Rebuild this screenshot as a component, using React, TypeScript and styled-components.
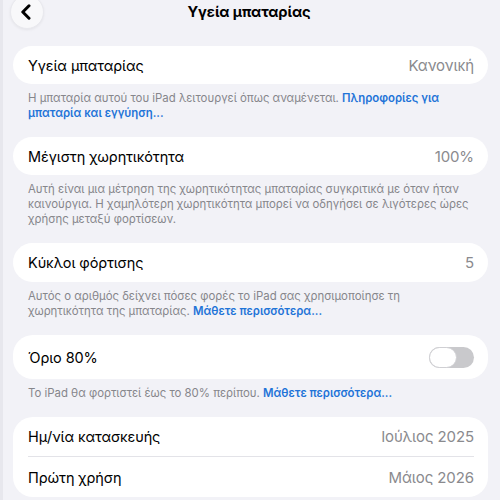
import styled, { createGlobalStyle } from 'styled-components';

const GlobalStyle = createGlobalStyle`
  html, body {
    margin: 0;
    padding: 0;
    background: #f2f2f7;
  }
  body {
    font-family: Inter, "Noto Sans", "Liberation Sans", sans-serif;
    -webkit-font-smoothing: antialiased;
  }
`;

const Page = styled.div`
  width: 500px;
  height: 500px;
  overflow: hidden;
  box-sizing: border-box;
  background: #f2f2f7;
  border-left: 3px solid #e7e7ed;
  padding: 0 12px 0 10px;
`;

const Header = styled.header`
  display: grid;
  grid-template-columns: 1fr auto 1fr;
  align-items: center;
  height: 34px;
  margin: -5px 0 17px -3px;
`;

const BackButton = styled.button`
  width: 34px;
  height: 34px;
  border-radius: 50%;
  border: 1px solid #e9e9ee;
  background: #f8f8fa;
  box-shadow: 0 1px 3px rgba(0, 0, 0, 0.06);
  display: flex;
  align-items: center;
  justify-content: center;
  padding: 0 3px 0 0;
  justify-self: start;
`;

const Title = styled.h1`
  margin: 0;
  font-size: 14.7px;
  font-weight: 700;
  color: #000;
  letter-spacing: -0.1px;
`;

const Card = styled.div`
  background: #fff;
  border-radius: 20px;
  padding: 0 14px 0 15px;
`;

const Row = styled.div<{ $height?: number; $divider?: boolean }>`
  display: flex;
  align-items: center;
  justify-content: space-between;
  height: ${({ $height }) => $height ?? 38}px;
  border-bottom: ${({ $divider }) => ($divider ? '1px solid #e3e3e8' : 'none')};
`;

const Label = styled.span`
  font-size: 14.5px;
  color: #000;
  letter-spacing: -0.1px;
`;

const Value = styled.span`
  font-size: 15px;
  color: #8a8a8e;
  letter-spacing: -0.1px;
`;

const Footer = styled.p`
  margin: 0;
  padding: 7px 15px 16px;
  font-size: 11.4px;
  line-height: 15px;
  color: #86868b;
  white-space: nowrap;
`;

const Link = styled.a`
  color: #1f74d8;
  font-weight: 600;
  text-decoration: none;
`;

const Toggle = styled.div`
  width: 45px;
  height: 21px;
  border-radius: 11px;
  background: #c9c9cc;
  display: flex;
  align-items: center;
`;

const Knob = styled.div`
  width: 28px;
  height: 21px;
  border-radius: 11px;
  background: #fff;
  box-sizing: border-box;
  border: 1px solid #cfcfd3;
`;

export default function App() {
  return (
    <>
      <GlobalStyle />
      <Page>
        <Header>
          <BackButton aria-label="Πίσω">
            <svg width="12" height="16" viewBox="0 0 12 16">
              <path
                d="M9 1.8 L2.8 8 L9 14.2"
                fill="none"
                stroke="#000"
                strokeWidth="3"
                strokeLinecap="round"
                strokeLinejoin="round"
              />
            </svg>
          </BackButton>
          <Title>Υγεία μπαταρίας</Title>
          <div />
        </Header>

        <Card>
          <Row>
            <Label>Υγεία μπαταρίας</Label>
            <Value>Κανονική</Value>
          </Row>
        </Card>
        <Footer>
          Η μπαταρία αυτού του iPad λειτουργεί όπως αναμένεται. <Link>Πληροφορίες για</Link>
          <br />
          <Link>μπαταρία και εγγύηση...</Link>
        </Footer>

        <Card>
          <Row>
            <Label>Μέγιστη χωρητικότητα</Label>
            <Value>100%</Value>
          </Row>
        </Card>
        <Footer>
          Αυτή είναι μια μέτρηση της χωρητικότητας μπαταρίας συγκριτικά με όταν ήταν
          <br />
          καινούργια. Η χαμηλότερη χωρητικότητα μπορεί να οδηγήσει σε λιγότερες ώρες
          <br />
          χρήσης μεταξύ φορτίσεων.
        </Footer>

        <Card>
          <Row $height={39}>
            <Label>Κύκλοι φόρτισης</Label>
            <Value>5</Value>
          </Row>
        </Card>
        <Footer>
          Αυτός ο αριθμός δείχνει πόσες φορές το iPad σας χρησιμοποίησε τη
          <br />
          χωρητικότητα της μπαταρίας. <Link>Μάθετε περισσότερα...</Link>
        </Footer>

        <Card>
          <Row $height={44}>
            <Label>Όριο 80%</Label>
            <Toggle>
              <Knob />
            </Toggle>
          </Row>
        </Card>
        <Footer>
          Το iPad θα φορτιστεί έως το 80% περίπου. <Link>Μάθετε περισσότερα...</Link>
        </Footer>

        <Card>
          <Row $height={39} $divider>
            <Label>Ημ/νία κατασκευής</Label>
            <Value>Ιούλιος 2025</Value>
          </Row>
          <Row $height={40}>
            <Label>Πρώτη χρήση</Label>
            <Value>Μάιος 2026</Value>
          </Row>
        </Card>
      </Page>
    </>
  );
}
